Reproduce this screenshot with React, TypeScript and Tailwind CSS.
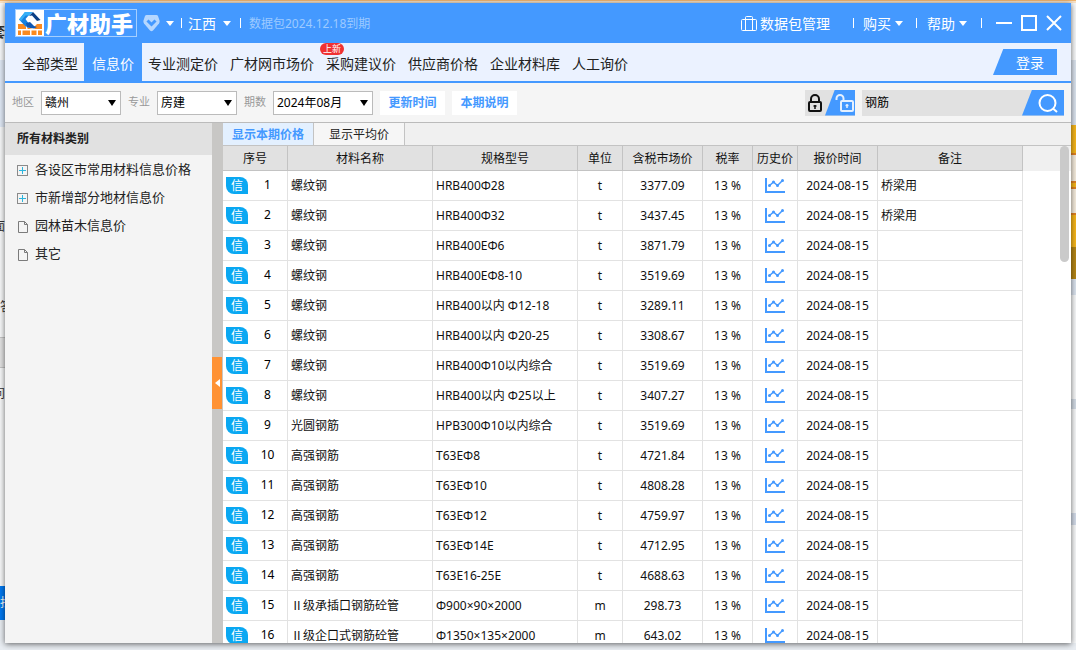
import { useState } from "react";

const NAV_ITEMS = [
  { label: "全部类型" },
  { label: "信息价", active: true },
  { label: "专业测定价" },
  { label: "广材网市场价" },
  { label: "采购建议价", badge: "上新" },
  { label: "供应商价格" },
  { label: "企业材料库" },
  { label: "人工询价" },
];

const CATEGORIES = [
  { label: "各设区市常用材料信息价格", expandable: true },
  { label: "市新增部分地材信息价", expandable: true },
  { label: "园林苗木信息价", expandable: false },
  { label: "其它", expandable: false },
];

const COLUMNS = [
  { label: "序号", width: "w-[65px]" },
  { label: "材料名称", width: "w-[145px]" },
  { label: "规格型号", width: "w-[145px]" },
  { label: "单位", width: "w-[45px]" },
  { label: "含税市场价", width: "w-[80px]" },
  { label: "税率", width: "w-[50px]" },
  { label: "历史价", width: "w-[45px]" },
  { label: "报价时间", width: "w-[80px]" },
  { label: "备注", width: "w-[145px]" },
];

const ROWS = [
  { name: "螺纹钢", spec: "HRB400Φ28", unit: "t", price: "3377.09", note: "桥梁用" },
  { name: "螺纹钢", spec: "HRB400Φ32", unit: "t", price: "3437.45", note: "桥梁用" },
  { name: "螺纹钢", spec: "HRB400EΦ6", unit: "t", price: "3871.79" },
  { name: "螺纹钢", spec: "HRB400EΦ8-10", unit: "t", price: "3519.69" },
  { name: "螺纹钢", spec: "HRB400以内 Φ12-18", unit: "t", price: "3289.11" },
  { name: "螺纹钢", spec: "HRB400以内 Φ20-25", unit: "t", price: "3308.67" },
  { name: "螺纹钢", spec: "HRB400Φ10以内综合", unit: "t", price: "3519.69" },
  { name: "螺纹钢", spec: "HRB400以内 Φ25以上", unit: "t", price: "3407.27" },
  { name: "光圆钢筋", spec: "HPB300Φ10以内综合", unit: "t", price: "3519.69" },
  { name: "高强钢筋", spec: "T63EΦ8", unit: "t", price: "4721.84" },
  { name: "高强钢筋", spec: "T63EΦ10", unit: "t", price: "4808.28" },
  { name: "高强钢筋", spec: "T63EΦ12", unit: "t", price: "4759.97" },
  { name: "高强钢筋", spec: "T63EΦ14E", unit: "t", price: "4712.95" },
  { name: "高强钢筋", spec: "T63E16-25E", unit: "t", price: "4688.63" },
  { name: "Ⅱ级承插口钢筋砼管", spec: "Φ900×90×2000", unit: "m", price: "298.73" },
  { name: "Ⅱ级企口式钢筋砼管", spec: "Φ1350×135×2000", unit: "m", price: "643.02" },
];

function Caret() {
  return (
    <svg width="8" height="5" viewBox="0 0 8 5" fill="currentColor" aria-hidden="true">
      <path d="M0 0h8L4 5z" />
    </svg>
  );
}

function Divider() {
  return <span className="h-[10px] w-px bg-white" />;
}

function Logo() {
  return (
    <div className="flex h-[28px] w-[122px] items-center border border-[#a5cfff]">
      <svg width="28" height="26" viewBox="0 0 28 26" className="shrink-0" aria-hidden="true">
        <path d="M0 0h28v26H0z" fill="#fff" />
        <path d="M2 14h6l2 3v2H2zM2 20.500h3V25H2zM6.500 20.500H14V25H6.500zM15.500 20.500h5V25h-5zM22 20.500h4V25h-4zM11.500 17.500l5 1.500h-5zM18.500 19v-2.500l2.500-2.500h5v5z" fill="#fb8a1e" />
        <path d="M9 2L3 9.500 10 17l3-3-3.500-5L13 5z" fill="#1681e0" />
        <path d="M9 2h8l-4 3.500H9.500L5 11 3 9.500z" fill="#35b0f7" />
        <path d="M17 2l7.500 8-3.500 1-5-5.500-3 .5z" fill="#0a3f86" />
        <path d="M10 13l4-1 4 4 3 1-3 1.500-7-1z" fill="#0e57b3" />
      </svg>
      <span className="pl-px text-[22px] font-black leading-none whitespace-nowrap">广材助手</span>
    </div>
  );
}

function TitleBar() {
  return (
    <header className="flex h-10 shrink-0 items-center bg-[#4499ff] pl-[10px] pr-[9px] text-[14px] text-white">
      <Logo />
      <button type="button" aria-label="会员" className="ml-[6px] flex items-center gap-[6px]">
        <svg width="17" height="17" viewBox="0 0 17 17" aria-hidden="true">
          <path d="M3.500 0h10q1 0 1.500 1l1.500 4.500q.5 1.500-.5 3L10 15.500q-1.500 1.500-3 0L1 8.500q-1-1.500-.5-3L2 1q.5-1 1.500-1z" fill="#b5d7ff" />
          <path d="M4.500 5.500l4 4 4-4" fill="none" stroke="#4499ff" strokeWidth="3" />
        </svg>
        <Caret />
      </button>
      <div className="ml-[7px] flex items-center gap-[6px]">
        <Divider />
        <button type="button" className="flex items-center gap-[7px] pt-px">
          江西
          <Caret />
        </button>
      </div>
      <div className="ml-[9px] flex items-center gap-2">
        <Divider />
        <span className="pt-px text-[12px] text-[#9dcaff]">数据包2024.12.18到期</span>
      </div>
      <div className="ml-auto flex items-center">
        <button type="button" className="flex items-center gap-[3px] pt-px">
          <svg width="16" height="15" viewBox="0 0 16 15" fill="none" stroke="currentColor" aria-hidden="true">
            <rect x=".5" y="3.500" width="15" height="11" rx="1" />
            <path d="M4.500 14.500v-13a1 1 0 0 1 1-1h5a1 1 0 0 1 1 1v13" />
          </svg>
          数据包管理
        </button>
        <div className="ml-[23px] flex items-center gap-[9px]">
          <Divider />
          <button type="button" className="flex items-center gap-1 pt-px">
            购买
            <Caret />
          </button>
        </div>
        <div className="ml-[13px] flex items-center gap-[10px]">
          <Divider />
          <button type="button" className="flex items-center gap-1 pt-px">
            帮助
            <Caret />
          </button>
        </div>
        <div className="ml-[14px] flex items-center gap-[14px]">
          <Divider />
          <div className="flex items-center gap-[9px]">
            <button type="button" aria-label="最小化">
              <svg width="16" height="16" viewBox="0 0 16 16" aria-hidden="true">
                <path d="M0 8h16" stroke="currentColor" strokeWidth="2" />
              </svg>
            </button>
            <button type="button" aria-label="最大化">
              <svg width="16" height="16" viewBox="0 0 16 16" aria-hidden="true">
                <rect x="1" y="1" width="14" height="14" fill="none" stroke="currentColor" strokeWidth="2" />
              </svg>
            </button>
            <button type="button" aria-label="关闭">
              <svg width="16" height="16" viewBox="0 0 16 16" aria-hidden="true">
                <path d="M1 1l14 14M15 1L1 15" stroke="currentColor" strokeWidth="2" />
              </svg>
            </button>
          </div>
        </div>
      </div>
    </header>
  );
}

function NavBar() {
  return (
    <nav className="flex h-10 shrink-0 items-stretch border-b-2 border-[#4499ff] bg-[#ebf2ff] pl-[11px] pr-[14px] text-[14px]">
      {NAV_ITEMS.map((item) => (
        <a
          key={item.label}
          href="#"
          className={
            item.active
              ? "flex items-center bg-[#4499ff] px-2 pt-[3px] text-white"
              : "relative flex items-center px-[6px] pt-[3px] text-[#222]"
          }
        >
          {item.label}
          {item.badge && (
            <span className="absolute left-0 top-0 h-3 w-6 rounded-full bg-[#f03232] text-center text-[9px] leading-[12px] text-white">
              {item.badge}
            </span>
          )}
        </a>
      ))}
      <button
        type="button"
        className="ml-auto h-[26px] w-16 self-center bg-[#4499ff] pl-[10px] text-white [clip-path:polygon(16%_0,100%_0,100%_100%,0_100%)]"
      >
        登录
      </button>
    </nav>
  );
}

function FilterSelect({ id, label, value, wide }: { id: string; label: string; value: string; wide?: boolean }) {
  return (
    <>
      <label htmlFor={id} className="text-[11px] text-[#999]">
        {label}
      </label>
      <div className={wide ? "relative w-[100px]" : "relative w-20"}>
        <select
          id={id}
          defaultValue={value}
          className="block h-6 w-full appearance-none border border-[#bbb] bg-white px-[3px] text-[12px] text-black"
        >
          <option>{value}</option>
        </select>
        <span className="pointer-events-none absolute right-[5px] top-[9px] text-black">
          <svg width="8" height="6" viewBox="0 0 8 6" fill="currentColor" aria-hidden="true">
            <path d="M0 0h8L4 6z" />
          </svg>
        </span>
      </div>
    </>
  );
}

function FilterBar() {
  const [keyword, setKeyword] = useState("钢筋");

  return (
    <div className="flex h-10 shrink-0 items-center gap-[7px] border-b border-[#bbb] bg-[#f5f5f5] px-[7px]">
      <FilterSelect id="region" label="地区" value="赣州" />
      <FilterSelect id="major" label="专业" value="房建" />
      <FilterSelect id="period" label="期数" value="2024年08月" wide />
      <button type="button" className="h-6 w-[65px] bg-white text-[12px] font-bold text-[#4499ff]">
        更新时间
      </button>
      <button type="button" className="h-6 w-[65px] bg-white text-[12px] font-bold text-[#4499ff]">
        本期说明
      </button>
      <div className="ml-auto flex h-[26px] bg-[#e1e1e1]">
        <button type="button" aria-label="锁定" className="flex w-5 items-center pl-[2px]">
          <svg width="16" height="18" viewBox="0 0 16 18" className="shrink-0" fill="none" stroke="#111" strokeWidth="2" aria-hidden="true">
            <rect x="2" y="8" width="12" height="9" rx="1" />
            <path d="M4 8V5a4 4 0 0 1 8 0v3" />
            <path d="M8 11v4M6.500 12h3" strokeWidth="1.500" />
          </svg>
        </button>
        <button
          type="button"
          aria-label="解锁"
          className="flex w-[30px] items-center justify-end bg-[#4499ff] pr-px [clip-path:polygon(33%_0,100%_0,100%_100%,0_100%)]"
        >
          <svg width="19" height="18" viewBox="0 0 19 18" fill="none" stroke="#e4f0ff" strokeWidth="2" aria-hidden="true">
            <rect x="6" y="7" width="12" height="10" rx="1" />
            <path d="M1.500 6V4.500a3.500 3.500 0 0 1 7 0V7" />
            <path d="M12 10v4M10.500 11.500h3" strokeWidth="1.500" />
          </svg>
        </button>
      </div>
      <form className="flex h-[26px] w-[202px] bg-[#e1e1e1]" onSubmit={(e) => e.preventDefault()}>
        <input
          type="text"
          aria-label="搜索材料"
          value={keyword}
          onChange={(e) => setKeyword(e.target.value)}
          className="min-w-0 flex-1 bg-transparent px-[3px] text-[12px] text-black outline-none"
        />
        <button
          type="submit"
          aria-label="搜索"
          className="flex w-[42px] items-center justify-end bg-[#4499ff] pr-[6px] [clip-path:polygon(24%_0,100%_0,100%_100%,0_100%)]"
        >
          <svg width="20" height="20" viewBox="0 0 20 20" fill="none" stroke="#fff" strokeWidth="2" aria-hidden="true">
            <circle cx="9.500" cy="10" r="8" />
            <path d="M15 15.500l4 3.500" />
          </svg>
        </button>
      </form>
    </div>
  );
}

function Sidebar() {
  return (
    <aside className="w-[207px] shrink-0 bg-[#f4f4f4]">
      <h2 className="h-8 bg-[#e1e1e1] pl-3 text-[12px] font-bold leading-8 text-[#222]">所有材料类别</h2>
      <ul className="pt-px text-[13px] text-[#222]">
        {CATEGORIES.map((cat) => (
          <li key={cat.label}>
            <button type="button" className="flex h-7 items-center gap-[7px] pl-3">
              {cat.expandable ? (
                <svg width="11" height="11" viewBox="0 0 11 11" fill="none" aria-hidden="true">
                  <rect x=".5" y=".5" width="10" height="10" stroke="#8a8a8a" />
                  <path d="M2 5.500h7M5.500 2v7" stroke="#2bb5dd" />
                </svg>
              ) : (
                <svg width="11" height="13" viewBox="0 0 11 13" fill="none" stroke="#7b7b7b" aria-hidden="true">
                  <path d="M1.500 1.500h6l3 3v8h-9zM7.500 1.500v3h3" />
                </svg>
              )}
              {cat.label}
            </button>
          </li>
        ))}
      </ul>
    </aside>
  );
}

function PriceTable() {
  return (
    <table className="w-full table-fixed border-separate border-spacing-0 text-[12px] text-[#111]">
      <thead>
        <tr className="h-[26px]">
          {COLUMNS.map((col) => (
            <th
              key={col.label}
              className={`${col.width} border-y border-r border-[#c3c3c3] bg-[#e1e1e1] p-0 pt-px font-normal`}
            >
              {col.label}
            </th>
          ))}
          <th className="border-t border-[#c3c3c3] bg-[#f0f0f0] p-0" />
        </tr>
      </thead>
      <tbody className="text-center [&_td]:h-[30px] [&_td]:border-b [&_td]:border-r [&_td]:border-[#e2e2e2] [&_td]:p-0">
        {ROWS.map((row, i) => (
          <tr key={i}>
            <td>
              <div className="flex items-center pb-px pl-[3px]">
                <span className="h-[17px] w-[22px] rounded-bl-lg rounded-tr-lg bg-[#0aa8f2] text-[12px] leading-[17px] text-white">
                  信
                </span>
                <span className="flex-1 text-black">{i + 1}</span>
              </div>
            </td>
            <td>
              <div className="truncate pl-[3px] text-left">{row.name}</div>
            </td>
            <td>
              <div className="truncate pl-[3px] text-left">{row.spec}</div>
            </td>
            <td>{row.unit}</td>
            <td>{row.price}</td>
            <td>13 %</td>
            <td>
              <button type="button" aria-label="查看历史价" className="flex w-full justify-center pb-px">
                <svg width="20" height="15" viewBox="0 0 20 15" fill="none" stroke="#4499ff" aria-hidden="true">
                  <path d="M1 0v14h19" strokeWidth="2" />
                  <path d="M4 8l4.500-4L12.500 7.500l5.500-5.500" strokeWidth="1.500" />
                  <g fill="#4499ff" stroke="none">
                    <circle cx="4.500" cy="7.500" r="1.500" />
                    <circle cx="8.500" cy="4" r="1.500" />
                    <circle cx="12.500" cy="7.500" r="1.500" />
                    <circle cx="17.500" cy="2.500" r="1.500" />
                  </g>
                </svg>
              </button>
            </td>
            <td>2024-08-15</td>
            <td>
              <div className="truncate pl-[3px] text-left">{row.note}</div>
            </td>
          </tr>
        ))}
      </tbody>
    </table>
  );
}

// slivers of the page that lies behind the window
function LeftEdge() {
  return (
    <div className="flex w-[5px] shrink-0 flex-col overflow-hidden bg-[#f7f8f9]">
      <div className="flex h-[57px] items-center justify-end text-[14px] font-bold text-[#333]">套</div>
      <div className="h-[67px] bg-[#dfe8f5]" />
      <div className="h-[88px]" />
      <div className="flex h-6 items-center justify-end text-[12px] text-[#333]">面</div>
      <div className="h-[56px]" />
      <div className="flex h-6 items-center text-[12px] text-[#333]">答</div>
      <div className="h-[18px]" />
      <div className="h-[31px] border-y border-[#c4c4c4] bg-[#e2e2e2]" />
      <div className="h-[14px]" />
      <div className="flex h-6 items-center justify-end text-[12px] text-[#333]">问</div>
      <div className="h-[180px]" />
      <div className="flex h-[34px] items-center bg-[#0078f0] text-[12px] text-white">找</div>
      <div className="flex-1 bg-[#e9edf2]" />
    </div>
  );
}

function RightEdge() {
  return (
    <div className="flex w-[5px] shrink-0 flex-col overflow-hidden bg-[#f7f8f9]">
      <div className="h-[57px]" />
      <div className="h-[65px] bg-[#dbe3ee]" />
      <div className="h-[28px] bg-[#f5b51c]" />
      <div className="h-[30px] border-y-2 border-[#e08224] bg-[#f5ecdd]" />
      <div className="h-[4px] bg-[#f5b51c]" />
      <div className="h-[28px] border-y-2 border-[#e08224] bg-[#f5ecdd]" />
      <div className="h-[32px] bg-[#f5b51c]" />
      <div className="h-[32px] bg-[#b48516]" />
      <div className="h-[16px] bg-[#dbe3ee]" />
      <div className="h-[104px]" />
      <div className="h-[10px] bg-[#d3dbe4]" />
      <div className="h-[104px]" />
      <div className="h-[12px] bg-[#d3dbe8]" />
      <div className="flex-1" />
    </div>
  );
}

export default function App() {
  return (
    <div className="flex h-screen flex-col overflow-hidden bg-[#e9edf2] font-['Noto_Sans','Noto_Sans_CJK_SC',sans-serif]">
      <div className="h-[3px] shrink-0 border-b-2 border-[#fbe3c6] bg-[#f3b66f]" />
      <div className="flex min-h-0 flex-1">
        <LeftEdge />
        <main className="relative flex min-w-0 flex-1 flex-col bg-white shadow-[0_1px_6px_rgba(0,0,0,0.6)]">
          <TitleBar />
          <NavBar />
          <FilterBar />
          <div className="flex min-h-0 flex-1">
            <Sidebar />
            <div className="flex w-[11px] shrink-0 flex-col justify-center bg-[#c8c7c5]">
              <button
                type="button"
                aria-label="收起"
                className="flex h-[52px] w-[10px] items-center justify-center bg-[#ff9234] text-white"
              >
                <svg width="5" height="8" viewBox="0 0 5 8" fill="currentColor" aria-hidden="true">
                  <path d="M5 0v8L0 4z" />
                </svg>
              </button>
            </div>
            <section className="flex min-w-0 flex-1 flex-col">
              <div className="flex h-[22px] shrink-0 bg-[#f0f0f0] text-[12px]">
                <button type="button" className="w-[91px] border-r border-[#c3c3c3] bg-[#e3f0ff] pt-px font-bold text-[#4499ff]">
                  显示本期价格
                </button>
                <button type="button" className="w-[91px] border-r border-[#c3c3c3] bg-[#f6f6f6] pt-[2px] text-[#222]">
                  显示平均价
                </button>
              </div>
              <div className="relative min-h-0 flex-1 overflow-hidden">
                <PriceTable />
                <div className="absolute right-[2px] top-px h-[116px] w-[9px] rounded-full bg-[#cacaca]" />
              </div>
            </section>
          </div>
        </main>
        <RightEdge />
      </div>
      <div className="h-[7px] shrink-0" />
    </div>
  );
}
